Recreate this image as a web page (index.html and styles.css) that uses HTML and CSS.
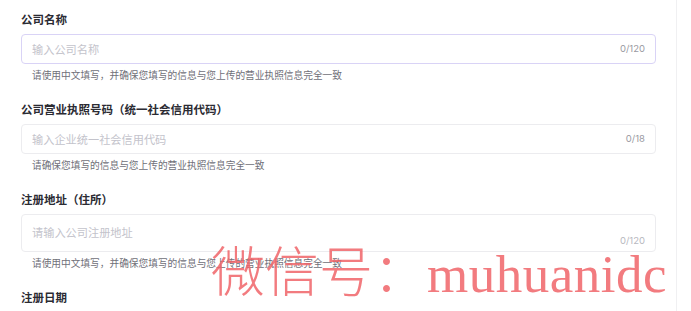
FILE: index.html
```html
<!DOCTYPE html>
<html lang="zh-CN">
<head>
	<meta charset="UTF-8">
	<title>企业信息</title>
<link rel="stylesheet" href="styles.css">
</head>
<body>
<div class="page">
  <form class="form">
    <div class="field">
      <div class="label">公司名称</div>
      <div class="box focused">
        <span class="placeholder">输入公司名称</span>
        <span class="count">0/120</span>
      </div>
      <div class="help">请使用中文填写，并确保您填写的信息与您上传的营业执照信息完全一致</div>
    </div>
    <div class="field">
      <div class="label">公司营业执照号码（统一社会信用代码）</div>
      <div class="box">
        <span class="placeholder">输入企业统一社会信用代码</span>
        <span class="count">0/18</span>
      </div>
      <div class="help">请确保您填写的信息与您上传的营业执照信息完全一致</div>
    </div>
    <div class="field">
      <div class="label">注册地址（住所）</div>
      <div class="box area">
        <span class="placeholder">请输入公司注册地址</span>
        <span class="count">0/120</span>
      </div>
      <div class="help">请使用中文填写，并确保您填写的信息与您上传的营业执照信息完全一致</div>
    </div>
    <div class="field">
      <div class="label">注册日期</div>
    </div>
  </form>
</div>
<!-- watermark lies over the form -->
<div class="watermark"><span class="wm-cjk">微信号：</span><span class="wm-latin">muhuanidc</span></div>
</body>
</html>
```

FILE: styles.css
```css
body{
margin: 0;
background: #ffffff;
font-family: "Noto Sans CJK SC", "Noto Sans", sans-serif;
position: relative;
height: 311px;
overflow: hidden;
}
.page{
width: 677px;
height: 311px;
box-sizing: border-box;
padding: 11px 20px 0 21px;
border-right: 1px solid #f0f0f2;
overflow: hidden;
}
/* fields */
.field{margin-bottom: 20px;}
.label{
font-size: 11.5px;
line-height: 16px;
font-weight: bold;
color: #2b2b33;
margin-bottom: 7px;
}
.box{
height: 30px;
box-sizing: border-box;
border: 1px solid #ececef;
border-radius: 4px;
display: flex;
align-items: center;
justify-content: space-between;
padding: 0 10px 0 10px;
}
.box.focused{border-color: #d9d3f6;}
.box.area{
height: 38px;
align-items: stretch;
padding-top: 10px;
padding-bottom: 4px;
}
.box.area>.placeholder{align-self: flex-start;}
.box.area>.count{align-self: flex-end;}
.placeholder{
font-size: 11.2px;
line-height: 14px;
color: #c3c3cb;
}
.count{
font-family: "Inter", "Open Sans", sans-serif;
font-size: 9.5px;
line-height: 12px;
color: #9a9aa2;
}
.box.area>.count{color: #b8b8c0;}
.help{
font-size: 9.7px;
line-height: 12px;
color: #6f6f78;
margin-top: 5px;
padding-left: 11px;
}
/* overlay watermark */
.watermark{
position: absolute;
left: 211px;
top: 240px;
line-height: 57px;
color: rgba(240, 100, 105, 0.85);
white-space: nowrap;
pointer-events: none;
}
.wm-cjk{
font-family: "Noto Sans CJK SC", sans-serif;
font-weight: 200;
font-size: 54px;
}
.wm-latin{
font-family: "Liberation Serif", serif;
font-size: 53px;
letter-spacing: 0.5px;
}
```
